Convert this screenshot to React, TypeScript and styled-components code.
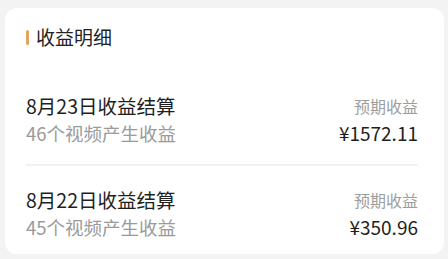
import styled, { createGlobalStyle } from "styled-components";

const GlobalStyle = createGlobalStyle`
  html, body {
    margin: 0;
    padding: 0;
    background: #f3f3f3;
    font-family: "Noto Sans CJK SC", "Noto Sans", sans-serif;
  }
`;

interface Settlement {
  date: string;
  videos: number;
  amount: string;
}

const data: Settlement[] = [
  { date: "8月23日收益结算", videos: 46, amount: "¥1572.11" },
  { date: "8月22日收益结算", videos: 45, amount: "¥350.96" },
];

const Page = styled.div`
  padding: 8px 4px 9px 5px;
`;

const Card = styled.div`
  background: #ffffff;
  border-radius: 12px;
  padding: 18px 26px 16px 21px;
`;

const Heading = styled.h2`
  display: flex;
  align-items: center;
  gap: 7px;
  margin: 0 0 47px;
  font-size: 19px;
  font-weight: 400;
  line-height: 22px;
  color: #222;
  &::before {
    content: "";
    width: 3px;
    height: 15px;
    border-radius: 2px;
    background: #e9a15f;
  }
`;

const Row = styled.div<{ $last?: boolean }>`
  display: flex;
  justify-content: space-between;
  align-items: flex-end;
  padding: 0 0 ${(p) => (p.$last ? "0" : "20px")};
  margin-bottom: ${(p) => (p.$last ? "0" : "23px")};
  border-bottom: ${(p) => (p.$last ? "none" : "2px solid #f1f1f1")};
`;

const Left = styled.div`
  display: flex;
  flex-direction: column;
  gap: 5px;
`;

const Right = styled.div`
  display: flex;
  flex-direction: column;
  align-items: flex-end;
  gap: 5px;
`;

const Title = styled.div`
  font-size: 19.5px;
  line-height: 22px;
  color: #1f1f1f;
`;

const Sub = styled.div`
  font-size: 18.5px;
  line-height: 22px;
  color: #9a9a9a;
`;

const Label = styled.div`
  font-size: 16px;
  line-height: 22px;
  color: #9d9d9d;
`;

const Amount = styled.div`
  font-size: 19px;
  line-height: 22px;
  color: #1f1f1f;
`;

export default function App() {
  return (
    <Page>
      <GlobalStyle />
      <Card>
        <Heading>收益明细</Heading>
        {data.map((d, i) => (
          <Row key={d.date} $last={i === data.length - 1}>
            <Left>
              <Title>{d.date}</Title>
              <Sub>{d.videos}个视频产生收益</Sub>
            </Left>
            <Right>
              <Label>预期收益</Label>
              <Amount>{d.amount}</Amount>
            </Right>
          </Row>
        ))}
      </Card>
    </Page>
  );
}
